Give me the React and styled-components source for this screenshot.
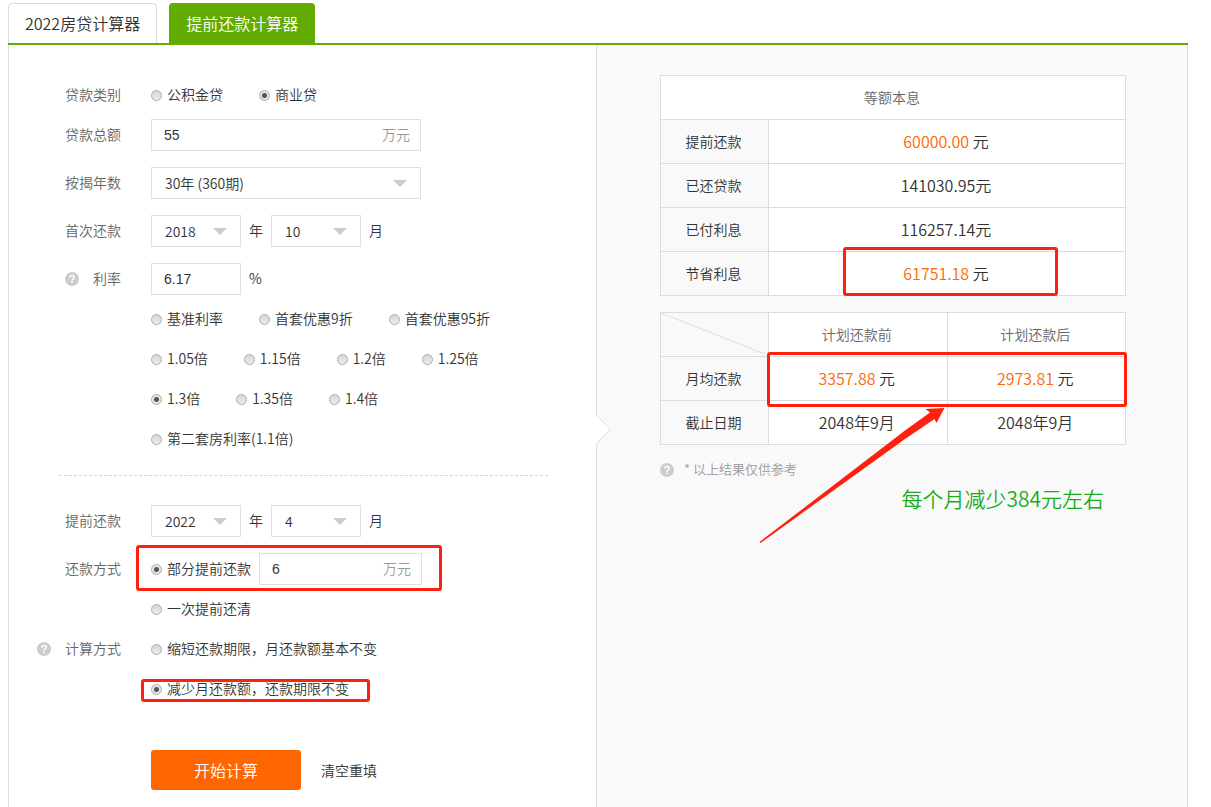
import React, {useState} from 'react';
import styled, {createGlobalStyle, css} from 'styled-components';

const GlobalStyle = createGlobalStyle`
  * {
    box-sizing: border-box;
  }
  body {
    margin: 0;
    background: #fff;
    color: #333;
    font: 350 14px/20px 'Noto Sans CJK SC', sans-serif;
  }
  input, select, button {
    margin: 0;
    font: inherit;
    color: inherit;
  }
`;

const Page = styled.div`
  display: flex;
  flex-direction: column;
  min-height: 100vh;
  padding: 3px 23px 0 8px;
`;

const Tabs = styled.nav`
  display: flex;
  gap: 12px;
  border-bottom: 2px solid #62ab00;
`;

const Tab = styled.button`
  height: 40px;
  padding: 0 16px 2px;
  border: 1px solid #dcdcdc;
  border-bottom: 0;
  border-radius: 4px 4px 0 0;
  background: #fff;
  font-size: 16px;
  cursor: pointer;
  ${props =>
    props.$active &&
    css`
      border-color: #62ab00;
      background: #62ab00;
      color: #fff;
    `}
`;

const Panels = styled.main`
  display: flex;
  flex: 1;
  border: solid #dcdcdc;
  border-width: 0 1px;
`;

const Form = styled.form`
  flex: 0 0 587px;
  padding: 34px 48px 16px 0;
`;

const Results = styled.section`
  position: relative;
  flex: 1;
  padding: 30px 61px 0 63px;
  border-left: 1px solid #dcdcdc;
  background: #f9f9f9;
`;

const Notch = styled.svg`
  position: absolute;
  top: 370px;
  left: -1px;
`;

const Row = styled.div`
  display: flex;
  align-items: center;
  height: 32px;
  margin-bottom: ${props => (props.$loose ? 16 : 8)}px;
`;

const Text = styled.span`
  padding-bottom: 2px;
`;

const RowLabel = styled.div`
  display: flex;
  justify-content: flex-end;
  align-items: center;
  gap: 14px;
  width: 112px;
  margin-right: 30px;
  color: #666;
`;

const Fields = styled.div`
  position: relative;
  display: flex;
  align-items: center;
  gap: ${props => (props.$options ? 36 : 8)}px;
`;

const RadioLabel = styled.label`
  display: flex;
  align-items: center;
  gap: 5px;
  white-space: nowrap;
  cursor: pointer;
`;

const RadioInput = styled.input`
  appearance: none;
  width: 11px;
  height: 11px;
  border: 1px solid #adadad;
  border-radius: 50%;
  background: linear-gradient(#d6d6d6, #ececec);
  &:checked {
    background: radial-gradient(circle, #555 0 2px, #e4e4e4 3px);
  }
`;

const InputBox = styled.div`
  display: flex;
  align-items: center;
  width: ${props => props.$width}px;
  height: 32px;
  padding: 0 10px 0 12px;
  border: 1px solid #e0e0e0;
  background: #fff;
  color: #999;
`;

const TextInput = styled.input`
  flex: 1;
  min-width: 0;
  padding: 0;
  border: 0;
  outline: 0;
  background: none;
  color: #333;
  font-family: 'Liberation Sans', sans-serif;
  font-weight: 400;
`;

const SelectBox = styled.div`
  position: relative;
  width: ${props => props.$width}px;
  &::after {
    content: '';
    position: absolute;
    top: 13px;
    right: 14px;
    border: solid transparent;
    border-width: 7px 7px 0;
    border-top-color: #ccc;
    pointer-events: none;
  }
`;

const StyledSelect = styled.select`
  appearance: none;
  width: 100%;
  height: 32px;
  padding: 0 13px;
  border: 1px solid #e0e0e0;
  border-radius: 0;
  background: #fff;
`;

const Divider = styled.hr`
  height: 0;
  margin: 20px 0 29px 50px;
  border: 0;
  border-top: 1px dashed #d5d5d5;
`;

const Actions = styled.div`
  display: flex;
  align-items: center;
  gap: 20px;
  margin: 45px 0 0 142px;
`;

const SubmitButton = styled.button`
  width: 150px;
  height: 40px;
  border: 0;
  border-radius: 3px;
  background: #f60;
  color: #fff;
  font-size: 16px;
  cursor: pointer;
`;

const ResetButton = styled.button`
  padding: 0;
  border: 0;
  background: none;
  cursor: pointer;
`;

const TableWrap = styled.div`
  position: relative;
  margin-bottom: 16px;
`;

const Table = styled.table`
  width: 100%;
  border-collapse: collapse;
  table-layout: fixed;
  background: #fff;
  text-align: center;
  th,
  td {
    height: 44px;
    padding: 0 2px 2px 0;
    border: 1px solid #dcdcdc;
  }
  td {
    position: relative;
    font-size: 16px;
  }
`;

const LabelCol = styled.col`
  width: 108px;
`;

const HeadCell = styled.th`
  color: #666;
  font-weight: inherit;
`;

const LabelCell = styled.th`
  background: #f9f9f9;
  font-weight: inherit;
  svg {
    display: block;
  }
`;

const Money = styled.span`
  color: #f60;
`;

// red frame drawn over whatever it annotates
const Mark = styled.span`
  position: absolute;
  inset: ${props => props.$inset};
  border: 3px solid #ff2010;
  border-radius: 3px;
  pointer-events: none;
`;

const Arrow = styled.svg`
  position: absolute;
  top: 94px;
  left: 99px;
  pointer-events: none;
`;

const Note = styled.p`
  display: flex;
  align-items: center;
  gap: 10px;
  height: 18px;
  margin: 0;
  color: #999;
  font-size: 13px;
`;

const Remark = styled.p`
  margin: 4px 22px 0 0;
  color: #1aad19;
  font-size: 21px;
  line-height: 30px;
  text-align: right;
`;

const HelpIcon = () => (
  <svg width="14" height="14" viewBox="0 0 14 14" role="img" aria-label="帮助">
    <circle cx="7" cy="7" r="7" fill="#ccc" />
    <path
      d="M4.9 5.5C4.9 4.2 5.8 3.5 7 3.5s2.1 .7 2.1 1.9C9.1 6.9 7.1 6.8 7.1 8.7"
      fill="none"
      stroke="#fff"
      strokeWidth="1.6"
    />
    <rect x="6.2" y="9.5" width="1.7" height="1.6" fill="#fff" />
  </svg>
);

const Radio = ({name, label, value, onChange}) => (
  <RadioLabel>
    <RadioInput
      type="radio"
      name={name}
      checked={value === label}
      onChange={() => onChange(label)}
    />
    <Text>{label}</Text>
  </RadioLabel>
);

const Select = ({width = 90, label, options}) => (
  <SelectBox $width={width}>
    <StyledSelect aria-label={label}>
      {options.map(option => (
        <option key={option}>{option}</option>
      ))}
    </StyledSelect>
  </SelectBox>
);

const RATE_ROWS = [
  ['基准利率', '首套优惠9折', '首套优惠95折'],
  ['1.05倍', '1.15倍', '1.2倍', '1.25倍'],
  ['1.3倍', '1.35倍', '1.4倍'],
  ['第二套房利率(1.1倍)']
];

const LoanForm = () => {
  const [loanType, setLoanType] = useState('商业贷');
  const [rate, setRate] = useState('1.3倍');
  const [payment, setPayment] = useState('部分提前还款');
  const [method, setMethod] = useState('减少月还款额，还款期限不变');

  return (
    <Form onSubmit={e => e.preventDefault()}>
      <Row>
        <RowLabel><Text>贷款类别</Text></RowLabel>
        <Fields $options>
          {['公积金贷', '商业贷'].map(label => (
            <Radio key={label} name="type" label={label} value={loanType} onChange={setLoanType} />
          ))}
        </Fields>
      </Row>
      <Row $loose>
        <RowLabel as="label" htmlFor="total"><Text>贷款总额</Text></RowLabel>
        <InputBox $width={270}>
          <TextInput id="total" defaultValue="55" />
          <Text>万元</Text>
        </InputBox>
      </Row>
      <Row $loose>
        <RowLabel><Text>按揭年数</Text></RowLabel>
        <Select width={270} label="按揭年数" options={['30年 (360期)']} />
      </Row>
      <Row $loose>
        <RowLabel><Text>首次还款</Text></RowLabel>
        <Fields>
          <Select label="首次还款年" options={['2018']} />
          <Text>年</Text>
          <Select label="首次还款月" options={['10']} />
          <Text>月</Text>
        </Fields>
      </Row>
      <Row>
        <RowLabel as="label" htmlFor="rate">
          <HelpIcon />
          <Text>利率</Text>
        </RowLabel>
        <Fields>
          <InputBox $width={90}>
            <TextInput id="rate" defaultValue="6.17" />
          </InputBox>
          <Text>%</Text>
        </Fields>
      </Row>
      {RATE_ROWS.map(labels => (
        <Row key={labels[0]}>
          <RowLabel />
          <Fields $options>
            {labels.map(label => (
              <Radio key={label} name="rate" label={label} value={rate} onChange={setRate} />
            ))}
          </Fields>
        </Row>
      ))}

      <Divider />

      <Row $loose>
        <RowLabel><Text>提前还款</Text></RowLabel>
        <Fields>
          <Select label="提前还款年" options={['2022']} />
          <Text>年</Text>
          <Select label="提前还款月" options={['4']} />
          <Text>月</Text>
        </Fields>
      </Row>
      <Row>
        <RowLabel><Text>还款方式</Text></RowLabel>
        <Fields>
          <Radio name="payment" label="部分提前还款" value={payment} onChange={setPayment} />
          <InputBox $width={163}>
            <TextInput aria-label="提前还款金额" defaultValue="6" />
            <Text>万元</Text>
          </InputBox>
          <Mark $inset="-8px -20px -6px -15px" />
        </Fields>
      </Row>
      <Row>
        <RowLabel />
        <Radio name="payment" label="一次提前还清" value={payment} onChange={setPayment} />
      </Row>
      <Row>
        <RowLabel>
          <HelpIcon />
          <Text>计算方式</Text>
        </RowLabel>
        <Radio
          name="method"
          label="缩短还款期限，月还款额基本不变"
          value={method}
          onChange={setMethod}
        />
      </Row>
      <Row>
        <RowLabel />
        <Fields>
          <Radio
            name="method"
            label="减少月还款额，还款期限不变"
            value={method}
            onChange={setMethod}
          />
          <Mark $inset="1px -21px -2px -10px" />
        </Fields>
      </Row>

      <Actions>
        <SubmitButton type="submit">开始计算</SubmitButton>
        <ResetButton type="reset">清空重填</ResetButton>
      </Actions>
    </Form>
  );
};

const LoanResults = () => (
  <Results>
    <Notch width="16" height="29" viewBox="0 0 16 29">
      <path d="M0 0L14.5 14.5L0 29Z" fill="#fff" />
      <path d="M0.5 0.5L14.5 14.5L0.5 28.5" fill="none" stroke="#dcdcdc" />
    </Notch>
    <TableWrap>
      <Table>
        <colgroup>
          <LabelCol />
          <col />
        </colgroup>
        <thead>
          <tr>
            <HeadCell colSpan="2">等额本息</HeadCell>
          </tr>
        </thead>
        <tbody>
          <tr>
            <LabelCell>提前还款</LabelCell>
            <td><Money>60000.00</Money> 元</td>
          </tr>
          <tr>
            <LabelCell>已还贷款</LabelCell>
            <td>141030.95元</td>
          </tr>
          <tr>
            <LabelCell>已付利息</LabelCell>
            <td>116257.14元</td>
          </tr>
          <tr>
            <LabelCell>节省利息</LabelCell>
            <td>
              <Money>61751.18</Money> 元
              <Mark $inset="-5px 67px -1px 74px" />
            </td>
          </tr>
        </tbody>
      </Table>
    </TableWrap>
    <TableWrap>
      <Table>
        <colgroup>
          <LabelCol />
          <col />
          <col />
        </colgroup>
        <thead>
          <tr>
            <LabelCell aria-label="项目">
              <svg width="105" height="41" viewBox="0 0 105 41">
                <path d="M0 0L104 41" stroke="#dcdcdc" />
              </svg>
            </LabelCell>
            <HeadCell>计划还款前</HeadCell>
            <HeadCell>计划还款后</HeadCell>
          </tr>
        </thead>
        <tbody>
          <tr>
            <LabelCell>月均还款</LabelCell>
            <td><Money>3357.88</Money> 元</td>
            <td><Money>2973.81</Money> 元</td>
          </tr>
          <tr>
            <LabelCell>截止日期</LabelCell>
            <td>2048年9月</td>
            <td>2048年9月</td>
          </tr>
        </tbody>
      </Table>
      <Mark $inset="40px -1px 38px 107px" />
      <Arrow width="187" height="139" viewBox="0 0 187 139">
        <path d="M0.5 136L146 24.5L171 6.5L166.5 3L185.5 2L177.5 17L175.5 13L146 33L1.5 137Z" fill="#ff2010" />
      </Arrow>
    </TableWrap>
    <Note>
      <HelpIcon />
      <Text>* 以上结果仅供参考</Text>
    </Note>
    <Remark>每个月减少384元左右</Remark>
  </Results>
);

const App = () => (
  <>
    <GlobalStyle />
    <Page>
      <Tabs>
        <Tab type="button">2022房贷计算器</Tab>
        <Tab type="button" $active>提前还款计算器</Tab>
      </Tabs>
      <Panels>
        <LoanForm />
        <LoanResults />
      </Panels>
    </Page>
  </>
);

export default App;
